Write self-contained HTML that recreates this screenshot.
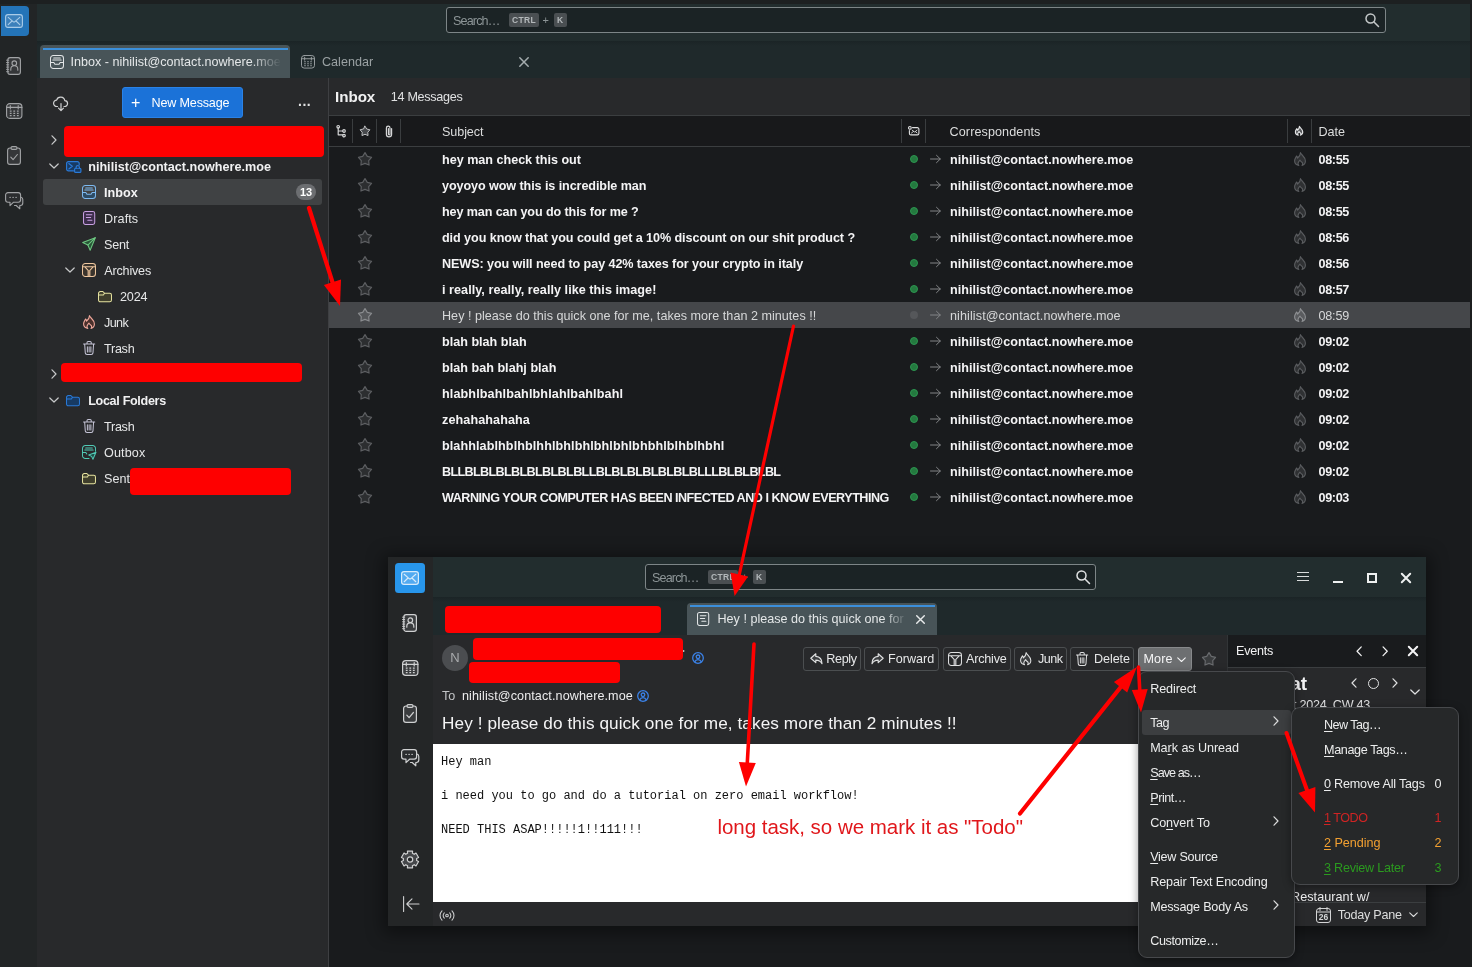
<!DOCTYPE html><html><head><meta charset="utf-8"><title>Thunderbird</title><style>
*{box-sizing:border-box;margin:0;padding:0}
html,body{width:1472px;height:967px;overflow:hidden;background:#191b1d}
body{position:relative;will-change:transform;font-family:"Liberation Sans",sans-serif;font-size:12.6px;color:#e6e7e8}
.a{position:absolute}
.t{position:absolute;white-space:pre;line-height:26px;height:26px;margin-top:1px}
.b{font-weight:bold}
svg{position:absolute;overflow:visible}
.ic{fill:none;stroke-width:1.2;stroke-linecap:round;stroke-linejoin:round}
.red{position:absolute;background:#fe0000;border-radius:4px}
.mi{position:absolute;white-space:pre;line-height:25px;height:25px;color:#eceded;font-size:12.6px;margin-top:1px}
u{text-decoration-thickness:1px;text-underline-offset:1.5px}
.btn{position:absolute;top:647px;height:24px;border:1px solid #4b4e50;border-radius:3px;line-height:22px;font-size:12.6px;color:#e6e7e8;white-space:pre}
.kbd{background:#4a4f52;color:#b4b9bb;font-size:8.5px;font-weight:bold;line-height:14px;height:14px;border-radius:2px;text-align:center;letter-spacing:.3px}
</style></head><body>
<div class="a" style="left:0;top:0;width:1472px;height:4px;background:#1d2021"></div>
<div class="a" style="left:37px;top:4px;width:1435px;height:37px;background:#222d2e"></div>
<div class="a" style="left:37px;top:41px;width:1435px;height:37px;background:linear-gradient(#1b2426,#1f292b 5px,#1f292b)"></div>
<div class="a" style="left:0;top:4px;width:37px;height:963px;background:#222526"></div>
<div class="a" style="left:1px;top:6px;width:28px;height:30px;background:#2474b8;border-radius:0 4px 4px 0"></div>
<svg class="ic" style="left:5px;top:14px" width="18" height="14" viewBox="0 0 18 14" ><g stroke="#a9cbe8" stroke-width="1.1"><rect x="0.6" y="0.6" width="16.8" height="12.8" rx="2.4" fill="#3c80bb"/><path d="M3.2 3.3L8.1 7.6a1.4 1.4 0 0 0 1.800 0L14.800 3.300M3.200 10.700L7 7M14.800 10.700L11 7"/></g></svg>
<svg class="ic" style="left:6.0px;top:57px" width="15" height="18" viewBox="0 0 15 18" ><g stroke="#a2a4a6" stroke-width="1.1"><rect x="1.800" y="0.600" width="12.600" height="16.800" rx="2.400" fill="#353739"/><path stroke-width="0.9" d="M0.500 3.200h2.200M0.500 5.500h2.200M0.500 7.800h2.200M0.500 10.100h2.200M0.500 12.400h2.200M0.500 14.700h2.200"/><circle cx="8.300" cy="6.200" r="2.300"/><path d="M4.800 13.200v-1a3.500 3.400 0 0 1 7 0v1"/></g></svg>
<svg class="ic" style="left:5.949999999999999px;top:103.0px" width="16.5" height="16.0" viewBox="0 0 16.500 16" ><g stroke="#a2a4a6" stroke-width="1.1"><rect x="0.600" y="0.600" width="15.300" height="14.800" rx="3.200" fill="#353739"/><path d="M0.600 4.400h15.300M4.300 2.600v3.400M12.200 2.600v3.400"/><path stroke-width="1.250" stroke-linecap="butt" d="M3.800 8h1.800M7.350 8h1.800M10.900 8h1.800M3.800 10.300h1.800M7.350 10.300h1.800M10.900 10.300h1.800M3.800 12.600h1.800M7.350 12.600h1.800M10.900 12.600h1.800"/></g></svg>
<svg class="ic" style="left:7px;top:146.3px" width="14" height="19" viewBox="0 0 14 19" ><g stroke="#a2a4a6" stroke-width="1.1"><rect x="0.600" y="2" width="12.800" height="16.400" rx="2.400" fill="#353739"/><rect x="4" y="0.600" width="6" height="2.800" rx="1.300" fill="#353739"/><path d="M3.800 11.200l2.300 2.500 4.300-5.200"/></g></svg>
<svg class="ic" style="left:5.0px;top:192.2px" width="18.4" height="17.6" viewBox="0 0 18.400 17.600" ><g stroke="#a2a4a6" stroke-width="1.1"><path d="M16 5.200a2.400 2.400 0 0 1 1.800 2.300v3.600a2.400 2.400 0 0 1-2.400 2.400h-.6v3.300l-3.600-3.300H9.500" fill="#2b2d2f"/><path fill="#2b2d2f" d="M3 0.600h10.200a2.400 2.400 0 0 1 2.400 2.400v4.800a2.400 2.400 0 0 1-2.400 2.400H8.600L5 13.600v-3.400H3A2.400 2.400 0 0 1 0.600 7.800V3A2.400 2.400 0 0 1 3 0.600z"/><path stroke-width="1.300" d="M5 5.400h.2M8 5.400h.2M11 5.400h.2"/></g></svg>
<div class="a" style="left:446px;top:7px;width:940px;height:26px;background:#1b2325;border:1px solid #7d8587;border-radius:3px"></div>
<div class="t" style="left:453px;top:7px;color:#8d9597;letter-spacing:-0.860px;">Search…</div>
<div class="a kbd" style="left:509px;top:13px;width:30px">CTRL</div>
<div class="a" style="left:542.5px;top:13px;font-size:11px;line-height:14px;color:#8d9597">+</div>
<div class="a kbd" style="left:553.5px;top:13px;width:13.5px">K</div>
<svg class="ic" style="left:1365px;top:12.5px" width="14" height="14" viewBox="0 0 14 14" ><g stroke="#c4c8c9" stroke-width="1.500"><circle cx="5.500" cy="5.500" r="4.500"/><path d="M9 9l4.500 4.500"/></g></svg>
<div class="a" style="left:40px;top:45px;width:250px;height:33px;background:#485458;border-radius:4px 4px 0 0"></div>
<div class="a" style="left:43px;top:47.500px;width:245px;height:2.500px;background:#3b8fdb"></div>
<svg class="ic" style="left:50.0px;top:54.5px" width="14.0" height="14.0" viewBox="0 0 16 16" ><g stroke="#e4e7e8" stroke-width="1.15"><path stroke="none" fill="none" d="M0.600 8.500h3.800l1.200 2.200h4.800l1.200-2.200h3.800v4a3 3 0 0 1-3 3H3.600a3 3 0 0 1-3-3z"/><rect x="0.600" y="0.600" width="14.800" height="14.800" rx="3.200"/><path d="M0.600 8.500h3.800l1.200 2.200h4.800l1.200-2.200h3.800M3.200 5.800h9.600M4.200 3.300h7.600"/></g></svg>
<div class="t" style="left:70.500px;top:48px;width:212px;overflow:hidden;color:#e4e7e8;-webkit-mask-image:linear-gradient(90deg,#000 180px,transparent 210px)">Inbox - nihilist@contact.nowhere.moe</div>
<svg class="ic" style="left:300.9875px;top:54.7px" width="14.025" height="13.6" viewBox="0 0 16.500 16" ><g stroke="#9da3a5" stroke-width="1.1"><rect x="0.600" y="0.600" width="15.300" height="14.800" rx="3.200" fill="none"/><path d="M0.600 4.400h15.300M4.300 2.600v3.400M12.200 2.600v3.400"/><path stroke-width="1.250" stroke-linecap="butt" d="M3.800 8h1.800M7.350 8h1.800M10.900 8h1.800M3.800 10.300h1.800M7.350 10.300h1.800M10.900 10.300h1.800M3.800 12.600h1.800M7.350 12.600h1.800M10.900 12.600h1.800"/></g></svg>
<div class="t" style="left:322px;top:48px;color:#9aa1a3">Calendar</div>
<svg class="ic" style="left:518.5px;top:57.0px" width="10.0" height="10.0" viewBox="0 0 10 10" ><path stroke="#a5adaf" stroke-width="1.5" d="M0.800 0.800l8.400 8.400M9.200 0.800L0.800 9.200"/></svg>
<div class="a" style="left:37px;top:78px;width:292px;height:889px;background:#28292b;border-right:1px solid #3e3f42"></div>
<div class="a" style="left:329px;top:78px;width:1143px;height:38px;background:#28292b;border-bottom:1px solid #3b3e40"></div>
<div class="t b" style="left:335px;top:83px;font-size:15.2px;color:#f1f1f2;letter-spacing:-0.046px;">Inbox</div>
<div class="t" style="left:390.8px;top:83px;color:#e0e1e2;letter-spacing:-0.295px;">14 Messages</div>
<div class="a" style="left:329px;top:116px;width:1143px;height:31px;background:#18191b;border-bottom:1px solid #3b3e40"></div>
<div class="a" style="left:352px;top:119px;width:1px;height:24px;background:#3a3d3f"></div>
<div class="a" style="left:376px;top:119px;width:1px;height:24px;background:#3a3d3f"></div>
<div class="a" style="left:400px;top:119px;width:1px;height:24px;background:#3a3d3f"></div>
<div class="a" style="left:901px;top:119px;width:1px;height:24px;background:#3a3d3f"></div>
<div class="a" style="left:925px;top:119px;width:1px;height:24px;background:#3a3d3f"></div>
<div class="a" style="left:1287px;top:119px;width:1px;height:24px;background:#3a3d3f"></div>
<div class="a" style="left:1311px;top:119px;width:1px;height:24px;background:#3a3d3f"></div>
<div class="t" style="left:442px;top:118px;color:#dcdddd;letter-spacing:-0.090px;">Subject</div>
<div class="t" style="left:949.6px;top:118px;color:#dcdddd;letter-spacing:0.089px;">Correspondents</div>
<div class="t" style="left:1318.5px;top:118px;color:#dcdddd;letter-spacing:-0.029px;">Date</div>
<svg class="ic" style="left:336px;top:125px" width="10" height="13" viewBox="0 0 10 13" ><g stroke="#d5d6d7"><path d="M2.200 2.600v7.200h4.600M2.200 6h4.600"/><circle cx="2.200" cy="1.800" r="1.300"/><circle cx="8" cy="6" r="1.300"/><circle cx="8" cy="10.600" r="1.300"/></g></svg>
<svg class="ic" style="left:359.0px;top:125.0px" width="12.0" height="12.0" viewBox="0 0 16 16" ><path stroke="#d5d6d7" fill="#47494c" stroke-width="1.15" d="M8.00 1.60 L10.29 5.34 L14.56 6.37 L11.71 9.71 L12.06 14.08 L8.00 12.40 L3.94 14.08 L4.29 9.71 L1.44 6.37 L5.71 5.34Z"/></svg>
<svg class="ic" style="left:385px;top:125px" width="8" height="13" viewBox="0 0 8 13" ><path stroke="#d5d6d7" d="M6.600 3.500v5.800a2.600 2.600 0 0 1-5.200 0V3a1.800 1.800 0 0 1 3.600 0v6a0.800 0.800 0 0 1-1.600 0V3.500"/></svg>
<svg class="ic" style="left:908px;top:125.5px" width="11.5" height="9.5" viewBox="0 0 11.5 9.5" ><g stroke="#e0e1e2" stroke-width="1.1"><path d="M4.500 1.600h4.900a1.500 1.500 0 0 1 1.500 1.500v4.300a1.500 1.500 0 0 1-1.500 1.500H2.900a1.500 1.500 0 0 1-1.500-1.500V4.500"/><path stroke-width="0.9" d="M3.500 7l2-1.600 0.800 0.600 0.800-0.600 2 1.600M4.200 4.200l1.500 1.200M9 4.200L7.500 5.400"/><circle cx="1.900" cy="1.900" r="1.350"/></g></svg>
<svg class="ic" style="left:1295.42px;top:126.24px" width="8.16" height="9.520000000000001" viewBox="0 0 12 14" ><path stroke="#e4e5e6" stroke-width="1.7" fill="#55575a" d="M6.500 0.600C7 3 11.400 4.500 11.400 9C11.400 11.400 9.800 13 8 13.400C8.900 12.400 8.900 10.800 7.600 10C6.800 9.500 6.200 9 6 8C5.200 9 4 10 4 11.500C4 12.300 4.300 13 4.800 13.400C2.500 13 0.600 11.200 0.600 8.800C0.600 6.500 2 5.500 2.600 4C3.300 4.600 3.600 5.400 3.600 6.200C5 5 6.500 3 6.500 0.600Z"/></svg>
<svg class="ic" style="left:357.0px;top:150.5px" width="16.0" height="16.0" viewBox="0 0 16 16" ><path stroke="#5d5f62" fill="#2c2e30" stroke-width="1.15" d="M8.00 1.60 L10.29 5.34 L14.56 6.37 L11.71 9.71 L12.06 14.08 L8.00 12.40 L3.94 14.08 L4.29 9.71 L1.44 6.37 L5.71 5.34Z"/></svg>
<div class="t b" style="left:442px;top:146px;color:#f4f4f5;letter-spacing:-0.015px;">hey man check this out</div>
<div class="a" style="left:909.500px;top:155px;width:8px;height:8px;border-radius:50%;background:#24793f;border:1.600px solid #2c9650"></div>
<svg class="ic" style="left:929.5px;top:154.5px" width="11" height="8" viewBox="0 0 11 8" ><path stroke="#838587" stroke-width="1" d="M0.500 4h9.800M6.500 0.300L10.300 4 6.500 7.700"/></svg>
<div class="t b" style="left:950px;top:146px;color:#f4f4f5;letter-spacing:0.032px;">nihilist@contact.nowhere.moe</div>
<svg class="ic" style="left:1293.5px;top:152.0px" width="12.0" height="14.0" viewBox="0 0 12 14" ><path stroke="#5a5c5f" stroke-width="1.1" fill="#2f3133" d="M6.500 0.600C7 3 11.400 4.500 11.400 9C11.400 11.400 9.800 13 8 13.400C8.900 12.400 8.900 10.800 7.600 10C6.800 9.500 6.200 9 6 8C5.200 9 4 10 4 11.500C4 12.300 4.300 13 4.800 13.400C2.500 13 0.600 11.200 0.600 8.800C0.600 6.500 2 5.500 2.600 4C3.300 4.600 3.600 5.400 3.600 6.200C5 5 6.500 3 6.500 0.600Z"/></svg>
<div class="t b" style="left:1318.5px;top:146px;color:#f4f4f5;letter-spacing:-0.345px;">08:55</div>
<svg class="ic" style="left:357.0px;top:176.5px" width="16.0" height="16.0" viewBox="0 0 16 16" ><path stroke="#5d5f62" fill="#2c2e30" stroke-width="1.15" d="M8.00 1.60 L10.29 5.34 L14.56 6.37 L11.71 9.71 L12.06 14.08 L8.00 12.40 L3.94 14.08 L4.29 9.71 L1.44 6.37 L5.71 5.34Z"/></svg>
<div class="t b" style="left:442px;top:172px;color:#f4f4f5;letter-spacing:-0.086px;">yoyoyo wow this is incredible man</div>
<div class="a" style="left:909.500px;top:181px;width:8px;height:8px;border-radius:50%;background:#24793f;border:1.600px solid #2c9650"></div>
<svg class="ic" style="left:929.5px;top:180.5px" width="11" height="8" viewBox="0 0 11 8" ><path stroke="#838587" stroke-width="1" d="M0.500 4h9.800M6.500 0.300L10.300 4 6.500 7.700"/></svg>
<div class="t b" style="left:950px;top:172px;color:#f4f4f5;letter-spacing:0.032px;">nihilist@contact.nowhere.moe</div>
<svg class="ic" style="left:1293.5px;top:178.0px" width="12.0" height="14.0" viewBox="0 0 12 14" ><path stroke="#5a5c5f" stroke-width="1.1" fill="#2f3133" d="M6.500 0.600C7 3 11.400 4.500 11.400 9C11.400 11.400 9.800 13 8 13.400C8.900 12.400 8.900 10.800 7.600 10C6.800 9.500 6.200 9 6 8C5.200 9 4 10 4 11.500C4 12.300 4.300 13 4.800 13.400C2.500 13 0.600 11.200 0.600 8.800C0.600 6.500 2 5.500 2.600 4C3.300 4.600 3.600 5.400 3.600 6.200C5 5 6.500 3 6.500 0.600Z"/></svg>
<div class="t b" style="left:1318.5px;top:172px;color:#f4f4f5;letter-spacing:-0.345px;">08:55</div>
<svg class="ic" style="left:357.0px;top:202.5px" width="16.0" height="16.0" viewBox="0 0 16 16" ><path stroke="#5d5f62" fill="#2c2e30" stroke-width="1.15" d="M8.00 1.60 L10.29 5.34 L14.56 6.37 L11.71 9.71 L12.06 14.08 L8.00 12.40 L3.94 14.08 L4.29 9.71 L1.44 6.37 L5.71 5.34Z"/></svg>
<div class="t b" style="left:442px;top:198px;color:#f4f4f5;letter-spacing:-0.110px;">hey man can you do this for me ?</div>
<div class="a" style="left:909.500px;top:207px;width:8px;height:8px;border-radius:50%;background:#24793f;border:1.600px solid #2c9650"></div>
<svg class="ic" style="left:929.5px;top:206.5px" width="11" height="8" viewBox="0 0 11 8" ><path stroke="#838587" stroke-width="1" d="M0.500 4h9.800M6.500 0.300L10.300 4 6.500 7.700"/></svg>
<div class="t b" style="left:950px;top:198px;color:#f4f4f5;letter-spacing:0.032px;">nihilist@contact.nowhere.moe</div>
<svg class="ic" style="left:1293.5px;top:204.0px" width="12.0" height="14.0" viewBox="0 0 12 14" ><path stroke="#5a5c5f" stroke-width="1.1" fill="#2f3133" d="M6.500 0.600C7 3 11.400 4.500 11.400 9C11.400 11.400 9.800 13 8 13.400C8.900 12.400 8.900 10.800 7.600 10C6.800 9.500 6.200 9 6 8C5.200 9 4 10 4 11.500C4 12.300 4.300 13 4.800 13.400C2.500 13 0.600 11.200 0.600 8.800C0.600 6.500 2 5.500 2.600 4C3.300 4.600 3.600 5.400 3.600 6.200C5 5 6.500 3 6.500 0.600Z"/></svg>
<div class="t b" style="left:1318.5px;top:198px;color:#f4f4f5;letter-spacing:-0.345px;">08:55</div>
<svg class="ic" style="left:357.0px;top:228.5px" width="16.0" height="16.0" viewBox="0 0 16 16" ><path stroke="#5d5f62" fill="#2c2e30" stroke-width="1.15" d="M8.00 1.60 L10.29 5.34 L14.56 6.37 L11.71 9.71 L12.06 14.08 L8.00 12.40 L3.94 14.08 L4.29 9.71 L1.44 6.37 L5.71 5.34Z"/></svg>
<div class="t b" style="left:442px;top:224px;color:#f4f4f5;letter-spacing:-0.069px;">did you know that you could get a 10% discount on our shit product ?</div>
<div class="a" style="left:909.500px;top:233px;width:8px;height:8px;border-radius:50%;background:#24793f;border:1.600px solid #2c9650"></div>
<svg class="ic" style="left:929.5px;top:232.5px" width="11" height="8" viewBox="0 0 11 8" ><path stroke="#838587" stroke-width="1" d="M0.500 4h9.800M6.500 0.300L10.300 4 6.500 7.700"/></svg>
<div class="t b" style="left:950px;top:224px;color:#f4f4f5;letter-spacing:0.032px;">nihilist@contact.nowhere.moe</div>
<svg class="ic" style="left:1293.5px;top:230.0px" width="12.0" height="14.0" viewBox="0 0 12 14" ><path stroke="#5a5c5f" stroke-width="1.1" fill="#2f3133" d="M6.500 0.600C7 3 11.400 4.500 11.400 9C11.400 11.400 9.800 13 8 13.400C8.900 12.400 8.900 10.800 7.600 10C6.800 9.500 6.200 9 6 8C5.200 9 4 10 4 11.500C4 12.300 4.300 13 4.800 13.400C2.500 13 0.600 11.200 0.600 8.800C0.600 6.500 2 5.500 2.600 4C3.300 4.600 3.600 5.400 3.600 6.200C5 5 6.500 3 6.500 0.600Z"/></svg>
<div class="t b" style="left:1318.5px;top:224px;color:#f4f4f5;letter-spacing:-0.345px;">08:56</div>
<svg class="ic" style="left:357.0px;top:254.5px" width="16.0" height="16.0" viewBox="0 0 16 16" ><path stroke="#5d5f62" fill="#2c2e30" stroke-width="1.15" d="M8.00 1.60 L10.29 5.34 L14.56 6.37 L11.71 9.71 L12.06 14.08 L8.00 12.40 L3.94 14.08 L4.29 9.71 L1.44 6.37 L5.71 5.34Z"/></svg>
<div class="t b" style="left:442px;top:250px;color:#f4f4f5;letter-spacing:-0.080px;">NEWS: you will need to pay 42% taxes for your crypto in italy</div>
<div class="a" style="left:909.500px;top:259px;width:8px;height:8px;border-radius:50%;background:#24793f;border:1.600px solid #2c9650"></div>
<svg class="ic" style="left:929.5px;top:258.5px" width="11" height="8" viewBox="0 0 11 8" ><path stroke="#838587" stroke-width="1" d="M0.500 4h9.800M6.500 0.300L10.300 4 6.500 7.700"/></svg>
<div class="t b" style="left:950px;top:250px;color:#f4f4f5;letter-spacing:0.032px;">nihilist@contact.nowhere.moe</div>
<svg class="ic" style="left:1293.5px;top:256.0px" width="12.0" height="14.0" viewBox="0 0 12 14" ><path stroke="#5a5c5f" stroke-width="1.1" fill="#2f3133" d="M6.500 0.600C7 3 11.400 4.500 11.400 9C11.400 11.400 9.800 13 8 13.400C8.900 12.400 8.900 10.800 7.600 10C6.800 9.500 6.200 9 6 8C5.200 9 4 10 4 11.500C4 12.300 4.300 13 4.800 13.400C2.500 13 0.600 11.200 0.600 8.800C0.600 6.500 2 5.500 2.600 4C3.300 4.600 3.600 5.400 3.600 6.200C5 5 6.500 3 6.500 0.600Z"/></svg>
<div class="t b" style="left:1318.5px;top:250px;color:#f4f4f5;letter-spacing:-0.345px;">08:56</div>
<svg class="ic" style="left:357.0px;top:280.5px" width="16.0" height="16.0" viewBox="0 0 16 16" ><path stroke="#5d5f62" fill="#2c2e30" stroke-width="1.15" d="M8.00 1.60 L10.29 5.34 L14.56 6.37 L11.71 9.71 L12.06 14.08 L8.00 12.40 L3.94 14.08 L4.29 9.71 L1.44 6.37 L5.71 5.34Z"/></svg>
<div class="t b" style="left:442px;top:276px;color:#f4f4f5;letter-spacing:0.050px;">i really, really, really like this image!</div>
<div class="a" style="left:909.500px;top:285px;width:8px;height:8px;border-radius:50%;background:#24793f;border:1.600px solid #2c9650"></div>
<svg class="ic" style="left:929.5px;top:284.5px" width="11" height="8" viewBox="0 0 11 8" ><path stroke="#838587" stroke-width="1" d="M0.500 4h9.800M6.500 0.300L10.300 4 6.500 7.700"/></svg>
<div class="t b" style="left:950px;top:276px;color:#f4f4f5;letter-spacing:0.032px;">nihilist@contact.nowhere.moe</div>
<svg class="ic" style="left:1293.5px;top:282.0px" width="12.0" height="14.0" viewBox="0 0 12 14" ><path stroke="#5a5c5f" stroke-width="1.1" fill="#2f3133" d="M6.500 0.600C7 3 11.400 4.500 11.400 9C11.400 11.400 9.800 13 8 13.400C8.900 12.400 8.900 10.800 7.600 10C6.800 9.500 6.200 9 6 8C5.200 9 4 10 4 11.500C4 12.300 4.300 13 4.800 13.400C2.500 13 0.600 11.200 0.600 8.800C0.600 6.500 2 5.500 2.600 4C3.300 4.600 3.600 5.400 3.600 6.200C5 5 6.500 3 6.500 0.600Z"/></svg>
<div class="t b" style="left:1318.5px;top:276px;color:#f4f4f5;letter-spacing:-0.345px;">08:57</div>
<div class="a" style="left:329px;top:302px;width:1143px;height:26px;background:#45474a"></div>
<svg class="ic" style="left:357.0px;top:306.5px" width="16.0" height="16.0" viewBox="0 0 16 16" ><path stroke="#8a8c8f" fill="#56585b" stroke-width="1.15" d="M8.00 1.60 L10.29 5.34 L14.56 6.37 L11.71 9.71 L12.06 14.08 L8.00 12.40 L3.94 14.08 L4.29 9.71 L1.44 6.37 L5.71 5.34Z"/></svg>
<div class="t" style="left:442px;top:302px;color:#d7d8d9;letter-spacing:0.017px;">Hey ! please do this quick one for me, takes more than 2 minutes !!</div>
<div class="a" style="left:909.500px;top:311px;width:8px;height:8px;border-radius:50%;background:#55575a"></div>
<svg class="ic" style="left:929.5px;top:310.5px" width="11" height="8" viewBox="0 0 11 8" ><path stroke="#838587" stroke-width="1" d="M0.500 4h9.800M6.500 0.300L10.300 4 6.500 7.700"/></svg>
<div class="t" style="left:950px;top:302px;color:#d7d8d9;letter-spacing:0.090px;">nihilist@contact.nowhere.moe</div>
<svg class="ic" style="left:1293.5px;top:308.0px" width="12.0" height="14.0" viewBox="0 0 12 14" ><path stroke="#8e9093" stroke-width="1.1" fill="#5a5c5f" d="M6.500 0.600C7 3 11.400 4.500 11.400 9C11.400 11.400 9.800 13 8 13.400C8.900 12.400 8.900 10.800 7.600 10C6.800 9.500 6.200 9 6 8C5.200 9 4 10 4 11.500C4 12.300 4.300 13 4.800 13.400C2.500 13 0.600 11.200 0.600 8.800C0.600 6.500 2 5.500 2.600 4C3.300 4.600 3.600 5.400 3.600 6.200C5 5 6.500 3 6.500 0.600Z"/></svg>
<div class="t" style="left:1318.5px;top:302px;color:#d7d8d9;letter-spacing:-0.206px;">08:59</div>
<svg class="ic" style="left:357.0px;top:332.5px" width="16.0" height="16.0" viewBox="0 0 16 16" ><path stroke="#5d5f62" fill="#2c2e30" stroke-width="1.15" d="M8.00 1.60 L10.29 5.34 L14.56 6.37 L11.71 9.71 L12.06 14.08 L8.00 12.40 L3.94 14.08 L4.29 9.71 L1.44 6.37 L5.71 5.34Z"/></svg>
<div class="t b" style="left:442px;top:328px;color:#f4f4f5;letter-spacing:-0.000px;">blah blah blah</div>
<div class="a" style="left:909.500px;top:337px;width:8px;height:8px;border-radius:50%;background:#24793f;border:1.600px solid #2c9650"></div>
<svg class="ic" style="left:929.5px;top:336.5px" width="11" height="8" viewBox="0 0 11 8" ><path stroke="#838587" stroke-width="1" d="M0.500 4h9.800M6.500 0.300L10.300 4 6.500 7.700"/></svg>
<div class="t b" style="left:950px;top:328px;color:#f4f4f5;letter-spacing:0.032px;">nihilist@contact.nowhere.moe</div>
<svg class="ic" style="left:1293.5px;top:334.0px" width="12.0" height="14.0" viewBox="0 0 12 14" ><path stroke="#5a5c5f" stroke-width="1.1" fill="#2f3133" d="M6.500 0.600C7 3 11.400 4.500 11.400 9C11.400 11.400 9.800 13 8 13.400C8.900 12.400 8.900 10.800 7.600 10C6.800 9.500 6.200 9 6 8C5.200 9 4 10 4 11.500C4 12.300 4.300 13 4.800 13.400C2.500 13 0.600 11.200 0.600 8.800C0.600 6.500 2 5.500 2.600 4C3.300 4.600 3.600 5.400 3.600 6.200C5 5 6.500 3 6.500 0.600Z"/></svg>
<div class="t b" style="left:1318.5px;top:328px;color:#f4f4f5;letter-spacing:-0.345px;">09:02</div>
<svg class="ic" style="left:357.0px;top:358.5px" width="16.0" height="16.0" viewBox="0 0 16 16" ><path stroke="#5d5f62" fill="#2c2e30" stroke-width="1.15" d="M8.00 1.60 L10.29 5.34 L14.56 6.37 L11.71 9.71 L12.06 14.08 L8.00 12.40 L3.94 14.08 L4.29 9.71 L1.44 6.37 L5.71 5.34Z"/></svg>
<div class="t b" style="left:442px;top:354px;color:#f4f4f5;letter-spacing:0.015px;">blah bah blahj blah</div>
<div class="a" style="left:909.500px;top:363px;width:8px;height:8px;border-radius:50%;background:#24793f;border:1.600px solid #2c9650"></div>
<svg class="ic" style="left:929.5px;top:362.5px" width="11" height="8" viewBox="0 0 11 8" ><path stroke="#838587" stroke-width="1" d="M0.500 4h9.800M6.500 0.300L10.300 4 6.500 7.700"/></svg>
<div class="t b" style="left:950px;top:354px;color:#f4f4f5;letter-spacing:0.032px;">nihilist@contact.nowhere.moe</div>
<svg class="ic" style="left:1293.5px;top:360.0px" width="12.0" height="14.0" viewBox="0 0 12 14" ><path stroke="#5a5c5f" stroke-width="1.1" fill="#2f3133" d="M6.500 0.600C7 3 11.400 4.500 11.400 9C11.400 11.400 9.800 13 8 13.400C8.900 12.400 8.900 10.800 7.600 10C6.800 9.500 6.200 9 6 8C5.200 9 4 10 4 11.500C4 12.300 4.300 13 4.800 13.400C2.500 13 0.600 11.200 0.600 8.800C0.600 6.500 2 5.500 2.600 4C3.300 4.600 3.600 5.400 3.600 6.200C5 5 6.500 3 6.500 0.600Z"/></svg>
<div class="t b" style="left:1318.5px;top:354px;color:#f4f4f5;letter-spacing:-0.345px;">09:02</div>
<svg class="ic" style="left:357.0px;top:384.5px" width="16.0" height="16.0" viewBox="0 0 16 16" ><path stroke="#5d5f62" fill="#2c2e30" stroke-width="1.15" d="M8.00 1.60 L10.29 5.34 L14.56 6.37 L11.71 9.71 L12.06 14.08 L8.00 12.40 L3.94 14.08 L4.29 9.71 L1.44 6.37 L5.71 5.34Z"/></svg>
<div class="t b" style="left:442px;top:380px;color:#f4f4f5;letter-spacing:0.121px;">hlabhlbahlbahlbhlahlbahlbahl</div>
<div class="a" style="left:909.500px;top:389px;width:8px;height:8px;border-radius:50%;background:#24793f;border:1.600px solid #2c9650"></div>
<svg class="ic" style="left:929.5px;top:388.5px" width="11" height="8" viewBox="0 0 11 8" ><path stroke="#838587" stroke-width="1" d="M0.500 4h9.800M6.500 0.300L10.300 4 6.500 7.700"/></svg>
<div class="t b" style="left:950px;top:380px;color:#f4f4f5;letter-spacing:0.032px;">nihilist@contact.nowhere.moe</div>
<svg class="ic" style="left:1293.5px;top:386.0px" width="12.0" height="14.0" viewBox="0 0 12 14" ><path stroke="#5a5c5f" stroke-width="1.1" fill="#2f3133" d="M6.500 0.600C7 3 11.400 4.500 11.400 9C11.400 11.400 9.800 13 8 13.400C8.900 12.400 8.900 10.800 7.600 10C6.800 9.500 6.200 9 6 8C5.200 9 4 10 4 11.500C4 12.300 4.300 13 4.800 13.400C2.500 13 0.600 11.200 0.600 8.800C0.600 6.500 2 5.500 2.600 4C3.300 4.600 3.600 5.400 3.600 6.200C5 5 6.500 3 6.500 0.600Z"/></svg>
<div class="t b" style="left:1318.5px;top:380px;color:#f4f4f5;letter-spacing:-0.345px;">09:02</div>
<svg class="ic" style="left:357.0px;top:410.5px" width="16.0" height="16.0" viewBox="0 0 16 16" ><path stroke="#5d5f62" fill="#2c2e30" stroke-width="1.15" d="M8.00 1.60 L10.29 5.34 L14.56 6.37 L11.71 9.71 L12.06 14.08 L8.00 12.40 L3.94 14.08 L4.29 9.71 L1.44 6.37 L5.71 5.34Z"/></svg>
<div class="t b" style="left:442px;top:406px;color:#f4f4f5;letter-spacing:0.098px;">zehahahahaha</div>
<div class="a" style="left:909.500px;top:415px;width:8px;height:8px;border-radius:50%;background:#24793f;border:1.600px solid #2c9650"></div>
<svg class="ic" style="left:929.5px;top:414.5px" width="11" height="8" viewBox="0 0 11 8" ><path stroke="#838587" stroke-width="1" d="M0.500 4h9.800M6.500 0.300L10.300 4 6.500 7.700"/></svg>
<div class="t b" style="left:950px;top:406px;color:#f4f4f5;letter-spacing:0.032px;">nihilist@contact.nowhere.moe</div>
<svg class="ic" style="left:1293.5px;top:412.0px" width="12.0" height="14.0" viewBox="0 0 12 14" ><path stroke="#5a5c5f" stroke-width="1.1" fill="#2f3133" d="M6.500 0.600C7 3 11.400 4.500 11.400 9C11.400 11.400 9.800 13 8 13.400C8.900 12.400 8.900 10.800 7.600 10C6.800 9.500 6.200 9 6 8C5.200 9 4 10 4 11.500C4 12.300 4.300 13 4.800 13.400C2.500 13 0.600 11.200 0.600 8.800C0.600 6.500 2 5.500 2.600 4C3.300 4.600 3.600 5.400 3.600 6.200C5 5 6.500 3 6.500 0.600Z"/></svg>
<div class="t b" style="left:1318.5px;top:406px;color:#f4f4f5;letter-spacing:-0.345px;">09:02</div>
<svg class="ic" style="left:357.0px;top:436.5px" width="16.0" height="16.0" viewBox="0 0 16 16" ><path stroke="#5d5f62" fill="#2c2e30" stroke-width="1.15" d="M8.00 1.60 L10.29 5.34 L14.56 6.37 L11.71 9.71 L12.06 14.08 L8.00 12.40 L3.94 14.08 L4.29 9.71 L1.44 6.37 L5.71 5.34Z"/></svg>
<div class="t b" style="left:442px;top:432px;color:#f4f4f5;letter-spacing:0.088px;">blahhlablhblhblhhlbhlbhlbhlbhlbhbhlblhblhbhl</div>
<div class="a" style="left:909.500px;top:441px;width:8px;height:8px;border-radius:50%;background:#24793f;border:1.600px solid #2c9650"></div>
<svg class="ic" style="left:929.5px;top:440.5px" width="11" height="8" viewBox="0 0 11 8" ><path stroke="#838587" stroke-width="1" d="M0.500 4h9.800M6.500 0.300L10.300 4 6.500 7.700"/></svg>
<div class="t b" style="left:950px;top:432px;color:#f4f4f5;letter-spacing:0.032px;">nihilist@contact.nowhere.moe</div>
<svg class="ic" style="left:1293.5px;top:438.0px" width="12.0" height="14.0" viewBox="0 0 12 14" ><path stroke="#5a5c5f" stroke-width="1.1" fill="#2f3133" d="M6.500 0.600C7 3 11.400 4.500 11.400 9C11.400 11.400 9.800 13 8 13.400C8.900 12.400 8.900 10.800 7.600 10C6.800 9.500 6.200 9 6 8C5.200 9 4 10 4 11.500C4 12.300 4.300 13 4.800 13.400C2.500 13 0.600 11.200 0.600 8.800C0.600 6.500 2 5.500 2.600 4C3.300 4.600 3.600 5.400 3.600 6.200C5 5 6.500 3 6.500 0.600Z"/></svg>
<div class="t b" style="left:1318.5px;top:432px;color:#f4f4f5;letter-spacing:-0.345px;">09:02</div>
<svg class="ic" style="left:357.0px;top:462.5px" width="16.0" height="16.0" viewBox="0 0 16 16" ><path stroke="#5d5f62" fill="#2c2e30" stroke-width="1.15" d="M8.00 1.60 L10.29 5.34 L14.56 6.37 L11.71 9.71 L12.06 14.08 L8.00 12.40 L3.94 14.08 L4.29 9.71 L1.44 6.37 L5.71 5.34Z"/></svg>
<div class="t b" style="left:442px;top:458px;color:#f4f4f5;letter-spacing:-0.639px;">BLLBLBLBLBLBLBLBLBLLBLBLBLBLBLBLBLLLBLBLBLBL</div>
<div class="a" style="left:909.500px;top:467px;width:8px;height:8px;border-radius:50%;background:#24793f;border:1.600px solid #2c9650"></div>
<svg class="ic" style="left:929.5px;top:466.5px" width="11" height="8" viewBox="0 0 11 8" ><path stroke="#838587" stroke-width="1" d="M0.500 4h9.800M6.500 0.300L10.300 4 6.500 7.700"/></svg>
<div class="t b" style="left:950px;top:458px;color:#f4f4f5;letter-spacing:0.032px;">nihilist@contact.nowhere.moe</div>
<svg class="ic" style="left:1293.5px;top:464.0px" width="12.0" height="14.0" viewBox="0 0 12 14" ><path stroke="#5a5c5f" stroke-width="1.1" fill="#2f3133" d="M6.500 0.600C7 3 11.400 4.500 11.400 9C11.400 11.400 9.800 13 8 13.400C8.900 12.400 8.900 10.800 7.600 10C6.800 9.500 6.200 9 6 8C5.200 9 4 10 4 11.500C4 12.300 4.300 13 4.800 13.400C2.500 13 0.600 11.200 0.600 8.800C0.600 6.500 2 5.500 2.600 4C3.300 4.600 3.600 5.400 3.600 6.200C5 5 6.500 3 6.500 0.600Z"/></svg>
<div class="t b" style="left:1318.5px;top:458px;color:#f4f4f5;letter-spacing:-0.345px;">09:02</div>
<svg class="ic" style="left:357.0px;top:488.5px" width="16.0" height="16.0" viewBox="0 0 16 16" ><path stroke="#5d5f62" fill="#2c2e30" stroke-width="1.15" d="M8.00 1.60 L10.29 5.34 L14.56 6.37 L11.71 9.71 L12.06 14.08 L8.00 12.40 L3.94 14.08 L4.29 9.71 L1.44 6.37 L5.71 5.34Z"/></svg>
<div class="t b" style="left:442px;top:484px;color:#f4f4f5;letter-spacing:-0.489px;">WARNING YOUR COMPUTER HAS BEEN INFECTED AND I KNOW EVERYTHING</div>
<div class="a" style="left:909.500px;top:493px;width:8px;height:8px;border-radius:50%;background:#24793f;border:1.600px solid #2c9650"></div>
<svg class="ic" style="left:929.5px;top:492.5px" width="11" height="8" viewBox="0 0 11 8" ><path stroke="#838587" stroke-width="1" d="M0.500 4h9.800M6.500 0.300L10.300 4 6.500 7.700"/></svg>
<div class="t b" style="left:950px;top:484px;color:#f4f4f5;letter-spacing:0.032px;">nihilist@contact.nowhere.moe</div>
<svg class="ic" style="left:1293.5px;top:490.0px" width="12.0" height="14.0" viewBox="0 0 12 14" ><path stroke="#5a5c5f" stroke-width="1.1" fill="#2f3133" d="M6.500 0.600C7 3 11.400 4.500 11.400 9C11.400 11.400 9.800 13 8 13.400C8.900 12.400 8.900 10.800 7.600 10C6.800 9.500 6.200 9 6 8C5.200 9 4 10 4 11.500C4 12.300 4.300 13 4.800 13.400C2.500 13 0.600 11.200 0.600 8.800C0.600 6.500 2 5.500 2.600 4C3.300 4.600 3.600 5.400 3.600 6.200C5 5 6.500 3 6.500 0.600Z"/></svg>
<div class="t b" style="left:1318.5px;top:484px;color:#f4f4f5;letter-spacing:-0.345px;">09:03</div>
<svg class="ic" style="left:53px;top:96.5px" width="16" height="15" viewBox="0 0 16 15" ><g stroke="#d0d1d2"><path d="M4.500 9.500H4a3.200 3.200 0 0 1-.4-6.400 4.200 4.200 0 0 1 8.200 0.600A2.900 2.900 0 0 1 11.500 9.500H11"/><path d="M8 6.500v7M5.500 11.200L8 13.700l2.500-2.500"/></g></svg>
<div class="a" style="left:122px;top:87px;width:121px;height:31px;background:#1b72d8;border-radius:3px;border:1px solid #2a82e6"></div>
<div class="t" style="left:131px;top:88.500px;color:#fff;font-size:16px;font-weight:normal">+</div>
<div class="t" style="left:151.5px;top:88.5px;color:#fff;letter-spacing:-0.176px;">New Message</div>
<div class="t b" style="left:298px;top:87px;color:#e0e1e2;font-size:14px;letter-spacing:.5px">...</div>
<svg class="ic" style="left:51.0px;top:135.0px" width="6.0" height="10.0" viewBox="0 0 6 10" ><path stroke="#c8c9ca" d="M1 0.8L5 5 1 9.200"/></svg>
<div class="red" style="left:64px;top:126px;width:260px;height:31px"></div>
<svg class="ic" style="left:49.0px;top:163.0px" width="10.0" height="6.0" viewBox="0 0 10 6" ><path stroke="#c8c9ca" d="M0.8 1L5 5 9.200 1"/></svg>
<svg class="ic" style="left:66.0px;top:160.8px" width="15.5" height="12" viewBox="0 0 15.500 12" ><g stroke="#2a7ad8" stroke-width="1.15"><path fill="#173a63" d="M7.500 9.900H2.400a1.800 1.800 0 0 1-1.800-1.800V2.400A1.800 1.800 0 0 1 2.400 0.600h9a1.800 1.800 0 0 1 1.800 1.800V4"/><path d="M2.800 2.500L6.300 5.300 2.800 8"/><rect x="8.600" y="7.200" width="6.300" height="4.200" rx="1" fill="#173a63"/><path d="M10.100 7.200V6.200a1.650 1.650 0 0 1 3.300 0v1"/></g></svg>
<div class="t b" style="left:88.2px;top:153px;color:#f1f1f2;letter-spacing:0.014px;">nihilist@contact.nowhere.moe</div>
<div class="a" style="left:43px;top:179px;width:279px;height:26px;background:#404244;border-radius:3px"></div>
<svg class="ic" style="left:82.0px;top:185.0px" width="14.0" height="14.0" viewBox="0 0 16 16" ><g stroke="#7db9f0" stroke-width="1.15"><path stroke="none" fill="#2d4b64" d="M0.600 8.500h3.800l1.200 2.200h4.800l1.200-2.200h3.800v4a3 3 0 0 1-3 3H3.600a3 3 0 0 1-3-3z"/><rect x="0.600" y="0.600" width="14.800" height="14.800" rx="3.200"/><path d="M0.600 8.500h3.800l1.200 2.200h4.800l1.200-2.200h3.800M3.200 5.800h9.600M4.200 3.300h7.600"/></g></svg>
<div class="t b" style="left:104px;top:179px;color:#f4f4f5;letter-spacing:0.040px;">Inbox</div>
<div class="a b" style="left:296px;top:184px;width:20px;height:16px;border-radius:8px;background:#6c6e71;color:#fff;font-size:11px;line-height:16px;text-align:center">13</div>
<svg class="ic" style="left:82.875px;top:211.0px" width="12.25" height="14.0" viewBox="0 0 14 16" ><g stroke="#c8a0e1" stroke-width="1.15"><rect x="0.600" y="0.600" width="12.800" height="14.800" rx="2.200" fill="#3c2d4b"/><path d="M3.800 4.300h6.400M3.800 7.300h5M5.500 10.500h4.700"/></g></svg>
<div class="t" style="left:104px;top:205px;letter-spacing:0.116px;">Drafts</div>
<svg class="ic" style="left:82.0px;top:237.0px" width="14.0" height="14.0" viewBox="0 0 16 16" ><g stroke="#6ec882" stroke-width="1.15"><path fill="#285537" d="M15.200 0.800L0.800 6.300l5.900 2.900 2.600 6z"/><path d="M6.700 9.200L15.200 0.800"/></g></svg>
<div class="t" style="left:104px;top:231px;letter-spacing:-0.230px;">Sent</div>
<svg class="ic" style="left:65.0px;top:267.0px" width="10.0" height="6.0" viewBox="0 0 10 6" ><path stroke="#c8c9ca" d="M0.8 1L5 5 9.200 1"/></svg>
<svg class="ic" style="left:82.0px;top:263.0px" width="14.0" height="14.0" viewBox="0 0 16 16" ><g stroke="#f0c8a0" stroke-width="1.15"><rect x="0.600" y="0.600" width="14.800" height="14.800" rx="3.200" fill="#3a332c"/><path d="M0.600 4.200h14.800M3 4.200l4 4.300v6.900M13 4.200l-4 4.300v6.900"/><path stroke-width="0.9" stroke-dasharray="1 1" d="M8 8.500v7"/></g></svg>
<div class="t" style="left:104.3px;top:257px;letter-spacing:-0.202px;">Archives</div>
<svg class="ic" style="left:98.0px;top:290.8125px" width="14.0" height="11.375" viewBox="0 0 16 13" ><g stroke="#e6e3a0" stroke-width="1.15"><path fill="#3f3e2c" d="M0.600 2.600a2 2 0 0 1 2-2h3l1.800 2h6a2 2 0 0 1 2 2v5.800a2 2 0 0 1-2 2H2.600a2 2 0 0 1-2-2z"/><path d="M0.600 4.600h5.600l1.200-2"/></g></svg>
<div class="t" style="left:120px;top:283px;letter-spacing:-0.183px;">2024</div>
<svg class="ic" style="left:83.0px;top:315.0px" width="12.0" height="14.0" viewBox="0 0 12 14" ><path stroke="#f0a89c" stroke-width="1.1" fill="#4a302c" d="M6.500 0.600C7 3 11.400 4.500 11.400 9C11.400 11.400 9.800 13 8 13.400C8.900 12.400 8.900 10.800 7.600 10C6.800 9.500 6.200 9 6 8C5.200 9 4 10 4 11.500C4 12.300 4.300 13 4.800 13.400C2.500 13 0.600 11.200 0.600 8.800C0.600 6.500 2 5.500 2.600 4C3.300 4.600 3.600 5.400 3.600 6.200C5 5 6.500 3 6.500 0.600Z"/></svg>
<div class="t" style="left:104px;top:309px;letter-spacing:-0.604px;">Junk</div>
<svg class="ic" style="left:82.875px;top:341.0px" width="12.25" height="14.0" viewBox="0 0 14 16" ><g stroke="#c5c4d6" stroke-width="1.15"><path d="M0.600 3.400h12.800M4.600 3.400V1.800a1.200 1.200 0 0 1 1.200-1.200h2.400a1.200 1.200 0 0 1 1.200 1.200v1.600M1.900 3.400l0.700 10.200a2 2 0 0 0 2 1.800h4.800a2 2 0 0 0 2-1.800l0.700-10.200M5 6.500v6M7 6.500v6M9 6.500v6"/></g></svg>
<div class="t" style="left:104px;top:335px;letter-spacing:-0.268px;">Trash</div>
<svg class="ic" style="left:51.0px;top:369.0px" width="6.0" height="10.0" viewBox="0 0 6 10" ><path stroke="#c8c9ca" d="M1 0.8L5 5 1 9.200"/></svg>
<div class="red" style="left:61px;top:363px;width:241px;height:19px"></div>
<svg class="ic" style="left:49.0px;top:397.0px" width="10.0" height="6.0" viewBox="0 0 10 6" ><path stroke="#c8c9ca" d="M0.8 1L5 5 9.200 1"/></svg>
<svg class="ic" style="left:66.0px;top:394.8125px" width="14.0" height="11.375" viewBox="0 0 16 13" ><g stroke="#2a7ad8" stroke-width="1.15"><path fill="#173a63" d="M0.600 2.600a2 2 0 0 1 2-2h3l1.800 2h6a2 2 0 0 1 2 2v5.800a2 2 0 0 1-2 2H2.600a2 2 0 0 1-2-2z"/><path d="M0.600 4.600h5.600l1.200-2"/></g></svg>
<div class="t b" style="left:88.2px;top:387px;color:#f1f1f2;letter-spacing:-0.325px;">Local Folders</div>
<svg class="ic" style="left:82.875px;top:419.0px" width="12.25" height="14.0" viewBox="0 0 14 16" ><g stroke="#c5c4d6" stroke-width="1.15"><path d="M0.600 3.400h12.800M4.600 3.400V1.800a1.200 1.200 0 0 1 1.200-1.200h2.400a1.200 1.200 0 0 1 1.200 1.200v1.600M1.900 3.400l0.700 10.200a2 2 0 0 0 2 1.800h4.800a2 2 0 0 0 2-1.800l0.700-10.200M5 6.500v6M7 6.500v6M9 6.500v6"/></g></svg>
<div class="t" style="left:104px;top:413px;letter-spacing:-0.268px;">Trash</div>
<svg class="ic" style="left:82.0px;top:445.0px" width="14.0" height="14.0" viewBox="0 0 16 16" ><g stroke="#50c8b4" stroke-width="1.15"><path d="M8 15.400H3.800a3.200 3.200 0 0 1-3.200-3.200V3.800A3.200 3.200 0 0 1 3.800 0.600h8.400a3.200 3.200 0 0 1 3.200 3.200V7"/><path d="M0.600 8.500h3.800l1 1.800M3.200 5.800h9.600M4.200 3.300h7.600"/><path fill="#1f4d46" d="M16 8.300l-8.300 3.200 3.300 1.500 1.500 3.300z"/></g></svg>
<div class="t" style="left:104px;top:439px;letter-spacing:0.129px;">Outbox</div>
<svg class="ic" style="left:82.0px;top:472.8125px" width="14.0" height="11.375" viewBox="0 0 16 13" ><g stroke="#e6e3a0" stroke-width="1.15"><path fill="#3f3e2c" d="M0.600 2.600a2 2 0 0 1 2-2h3l1.800 2h6a2 2 0 0 1 2 2v5.800a2 2 0 0 1-2 2H2.600a2 2 0 0 1-2-2z"/><path d="M0.600 4.600h5.600l1.200-2"/></g></svg>
<div class="t" style="left:104px;top:465px">Sent-</div>
<div class="red" style="left:130px;top:468px;width:161px;height:27px"></div>
<div class="a" style="left:1470px;top:4px;width:2px;height:963px;background:#1c1e1f"></div>
<div class="a" style="left:388px;top:556.5px;width:1038px;height:369px;background:#28292b;box-shadow:0 3px 16px 5px rgba(0,0,0,.4)"></div>
<div class="a" style="left:433px;top:557px;width:993px;height:40px;background:#222d2e"></div>
<div class="a" style="left:433px;top:597px;width:993px;height:38px;background:linear-gradient(#1b2426,#1f292b 5px,#1f292b)"></div>
<div class="a" style="left:388px;top:556.5px;width:45px;height:369px;background:#242627"></div>
<div class="a" style="left:395px;top:563px;width:30px;height:30px;background:#2896eb;border-radius:3.5px"></div>
<svg class="ic" style="left:401px;top:571px" width="18" height="14" viewBox="0 0 18 14" ><g stroke="#d6ebfb" stroke-width="1.2"><rect x="0.6" y="0.6" width="16.8" height="12.8" rx="2.4" fill="#52aaf0"/><path d="M3.2 3.3L8.1 7.6a1.4 1.4 0 0 0 1.800 0L14.800 3.300M3.200 10.700L7 7M14.800 10.700L11 7"/></g></svg>
<svg class="ic" style="left:402.0px;top:614px" width="15" height="18" viewBox="0 0 15 18" ><g stroke="#cfd0d1" stroke-width="1.2"><rect x="1.800" y="0.600" width="12.600" height="16.800" rx="2.400" fill="#3a3c3e"/><path stroke-width="0.9" d="M0.500 3.200h2.200M0.500 5.500h2.200M0.500 7.800h2.200M0.500 10.100h2.200M0.500 12.400h2.200M0.500 14.700h2.200"/><circle cx="8.300" cy="6.200" r="2.300"/><path d="M4.800 13.200v-1a3.500 3.400 0 0 1 7 0v1"/></g></svg>
<svg class="ic" style="left:401.75px;top:660.0px" width="16.5" height="16.0" viewBox="0 0 16.500 16" ><g stroke="#cfd0d1" stroke-width="1.2"><rect x="0.600" y="0.600" width="15.300" height="14.800" rx="3.200" fill="#3a3c3e"/><path d="M0.600 4.400h15.300M4.300 2.600v3.400M12.200 2.600v3.400"/><path stroke-width="1.250" stroke-linecap="butt" d="M3.800 8h1.800M7.350 8h1.800M10.900 8h1.800M3.800 10.300h1.800M7.350 10.300h1.800M10.900 10.300h1.800M3.800 12.600h1.800M7.350 12.600h1.800M10.900 12.600h1.800"/></g></svg>
<svg class="ic" style="left:403px;top:703.5px" width="14" height="19" viewBox="0 0 14 19" ><g stroke="#cfd0d1" stroke-width="1.2"><rect x="0.600" y="2" width="12.800" height="16.400" rx="2.400" fill="#3a3c3e"/><rect x="4" y="0.600" width="6" height="2.800" rx="1.300" fill="#3a3c3e"/><path d="M3.800 11.200l2.300 2.500 4.300-5.200"/></g></svg>
<svg class="ic" style="left:400.8px;top:749.2px" width="18.4" height="17.6" viewBox="0 0 18.400 17.600" ><g stroke="#cfd0d1" stroke-width="1.2"><path d="M16 5.200a2.400 2.400 0 0 1 1.800 2.300v3.600a2.400 2.400 0 0 1-2.400 2.400h-.6v3.300l-3.600-3.300H9.500" fill="#2b2d2f"/><path fill="#2b2d2f" d="M3 0.600h10.200a2.400 2.400 0 0 1 2.400 2.400v4.800a2.400 2.400 0 0 1-2.400 2.400H8.600L5 13.600v-3.400H3A2.400 2.400 0 0 1 0.600 7.800V3A2.400 2.400 0 0 1 3 0.600z"/><path stroke-width="1.300" d="M5 5.400h.2M8 5.400h.2M11 5.400h.2"/></g></svg>
<svg class="ic" style="left:401px;top:849.5px" width="18" height="19" viewBox="0 0 18 19" ><g stroke="#cfd0d1" stroke-width="1.2"><path fill="#45474a" d="M6.43 1.08 L11.57 1.08 L11.40 3.25 L13.22 4.29 L15.00 3.06 L17.57 7.52 L15.62 8.45 L15.62 10.55 L17.57 11.48 L15.00 15.94 L13.22 14.71 L11.40 15.75 L11.57 17.92 L6.43 17.92 L6.60 15.75 L4.78 14.71 L3.00 15.94 L0.43 11.48 L2.38 10.55 L2.38 8.45 L0.43 7.52 L3.00 3.06 L4.78 4.29 L6.60 3.25Z"/><circle cx="9" cy="9.500" r="2.700" fill="#222526"/></g></svg>
<svg class="ic" style="left:402.5px;top:895.5px" width="17" height="16" viewBox="0 0 17 16" ><g stroke="#cfd0d1" stroke-width="1.100"><path d="M0.600 0.500v15M3.800 8H16M9 2.800L3.800 8l5.200 5.200"/></g></svg>
<div class="a" style="left:645px;top:564px;width:451px;height:26px;background:#1b2325;border:1px solid #7d8587;border-radius:3px"></div>
<div class="t" style="left:652px;top:564px;color:#8d9597;letter-spacing:-0.860px;">Search…</div>
<div class="a kbd" style="left:708px;top:570px;width:30px">CTRL</div>
<div class="a" style="left:741.5px;top:570px;font-size:11px;line-height:14px;color:#8d9597">+</div>
<div class="a kbd" style="left:752.5px;top:570px;width:13.5px">K</div>
<svg class="ic" style="left:1075.5px;top:570px" width="14" height="14" viewBox="0 0 14 14" ><g stroke="#e0e2e3" stroke-width="1.500"><circle cx="5.500" cy="5.500" r="4.500"/><path d="M9 9l4.500 4.500"/></g></svg>
<div class="a" style="left:1297px;top:572px;width:12px;height:1px;background:#d9dcdc"></div>
<div class="a" style="left:1297px;top:576px;width:12px;height:1px;background:#d9dcdc"></div>
<div class="a" style="left:1297px;top:580px;width:12px;height:1px;background:#d9dcdc"></div>
<div class="a" style="left:1333px;top:581px;width:10px;height:2px;background:#eef0f0"></div>
<div class="a" style="left:1367px;top:573px;width:10px;height:10px;border:2px solid #eef0f0"></div>
<svg class="ic" style="left:1400.5px;top:573.0px" width="10.0" height="10.0" viewBox="0 0 10 10" ><path stroke="#eef0f0" stroke-width="2" d="M0.800 0.800l8.400 8.400M9.200 0.800L0.800 9.200"/></svg>
<div class="red" style="left:445px;top:606px;width:216px;height:27px"></div>
<div class="a" style="left:687px;top:603px;width:250px;height:32px;background:#485458;border-radius:4px 4px 0 0"></div>
<div class="a" style="left:689.500px;top:604.500px;width:245px;height:2.500px;background:#3b8fdb"></div>
<svg class="ic" style="left:697.375px;top:612.0px" width="12.25" height="14.0" viewBox="0 0 14 16" ><g stroke="#e4e7e8" stroke-width="1.15"><rect x="0.600" y="0.600" width="12.800" height="14.800" rx="2.200" fill="none"/><path d="M3.800 4.300h6.400M3.800 7.300h5M5.500 10.500h4.700"/></g></svg>
<div class="t" style="left:717.500px;top:604.500px;width:190px;overflow:hidden;color:#e4e7e8;-webkit-mask-image:linear-gradient(90deg,#000 165px,transparent 190px)">Hey ! please do this quick one for me, takes</div>
<svg class="ic" style="left:915.5px;top:614.5px" width="9.0" height="9.0" viewBox="0 0 10 10" ><path stroke="#e8eaeb" stroke-width="1.6" d="M0.800 0.800l8.400 8.400M9.200 0.800L0.800 9.200"/></svg>
<div class="a" style="left:442px;top:645px;width:26px;height:26px;border-radius:50%;background:#4b4d50;color:#a9abad;text-align:center;line-height:26px;font-size:13px">N</div>
<div class="a" style="left:679.5px;top:645.5px;font-size:9px;color:#e6e7e8">&gt;</div>
<div class="red" style="left:473px;top:638px;width:210px;height:22px"></div>
<div class="red" style="left:469px;top:662px;width:151px;height:21px"></div>
<svg class="ic" style="left:692px;top:652px" width="12" height="12" viewBox="0 0 12 12" ><g stroke="#3b82e8" stroke-width="1.300"><circle cx="6" cy="6" r="5.300"/><circle cx="6" cy="4.800" r="1.800"/><path d="M2.800 9.800a3.400 3.400 0 0 1 6.400 0"/></g></svg>
<div class="t" style="left:442px;top:681.5px;color:#c3c5c7">To</div>
<div class="t" style="left:462px;top:681.5px;color:#ececed;letter-spacing:0.097px;">nihilist@contact.nowhere.moe</div>
<svg class="ic" style="left:637px;top:690px" width="12" height="12" viewBox="0 0 12 12" ><g stroke="#3b82e8" stroke-width="1.300"><circle cx="6" cy="6" r="5.300"/><circle cx="6" cy="4.800" r="1.800"/><path d="M2.800 9.800a3.400 3.400 0 0 1 6.400 0"/></g></svg>
<div class="t" style="left:442px;top:709px;font-size:17.2px;color:#f4f4f5;letter-spacing:0.081px;">Hey ! please do this quick one for me, takes more than 2 minutes !!</div>
<div class="btn" style="left:802.5px;width:58px"></div>
<svg class="ic" style="left:809.5px;top:653px" width="13" height="12" viewBox="0 0 13 12" ><path stroke="#e0e1e2" stroke-width="1.15" fill="#3c3e40" d="M5.800 0.800L0.800 5.200l5 4.400V7.100c3 0 4.800 1 6.200 3.600C12 6.600 9.800 3.700 5.800 3.400z"/></svg>
<div class="t" style="left:826.3px;top:645px;color:#e6e7e8;letter-spacing:-0.383px;">Reply</div>
<div class="btn" style="left:864px;width:75px"></div>
<svg class="ic" style="left:870.5px;top:653px" width="13" height="12" viewBox="0 0 13 12" ><path stroke="#e0e1e2" stroke-width="1.15" fill="#3c3e40" d="M7.200 0.800l5 4.400-5 4.400V7.100c-3 0-4.800 1-6.200 3.600C1 6.600 3.200 3.700 7.200 3.400z"/></svg>
<div class="t" style="left:888px;top:645px;color:#e6e7e8;letter-spacing:0.027px;">Forward</div>
<div class="btn" style="left:942.5px;width:68px"></div>
<svg class="ic" style="left:948.0px;top:652.0px" width="14.0" height="14.0" viewBox="0 0 16 16" ><g stroke="#e0e1e2" stroke-width="1.15"><rect x="0.600" y="0.600" width="14.800" height="14.800" rx="3.200" fill="none"/><path d="M0.600 4.200h14.800M3 4.200l4 4.300v6.900M13 4.200l-4 4.300v6.900"/><path stroke-width="0.9" stroke-dasharray="1 1" d="M8 8.500v7"/></g></svg>
<div class="t" style="left:966px;top:645px;color:#e6e7e8;letter-spacing:-0.202px;">Archive</div>
<div class="btn" style="left:1014px;width:52.5px"></div>
<svg class="ic" style="left:1020.3px;top:652.35px" width="11.399999999999999" height="13.299999999999999" viewBox="0 0 12 14" ><path stroke="#e0e1e2" stroke-width="1.1" fill="#3c3e40" d="M6.500 0.600C7 3 11.400 4.500 11.400 9C11.400 11.400 9.800 13 8 13.400C8.900 12.400 8.900 10.800 7.600 10C6.800 9.500 6.200 9 6 8C5.200 9 4 10 4 11.500C4 12.300 4.300 13 4.800 13.400C2.500 13 0.600 11.200 0.600 8.800C0.600 6.500 2 5.500 2.600 4C3.300 4.600 3.600 5.400 3.600 6.200C5 5 6.500 3 6.500 0.600Z"/></svg>
<div class="t" style="left:1038px;top:645px;color:#e6e7e8;letter-spacing:-0.529px;">Junk</div>
<div class="btn" style="left:1070px;width:64px"></div>
<svg class="ic" style="left:1076.375px;top:652.0px" width="12.25" height="14.0" viewBox="0 0 14 16" ><g stroke="#e0e1e2" stroke-width="1.15"><path d="M0.600 3.400h12.800M4.600 3.400V1.800a1.200 1.200 0 0 1 1.200-1.200h2.400a1.200 1.200 0 0 1 1.200 1.200v1.600M1.900 3.400l0.700 10.200a2 2 0 0 0 2 1.800h4.800a2 2 0 0 0 2-1.800l0.700-10.200M5 6.500v6M7 6.500v6M9 6.500v6"/></g></svg>
<div class="t" style="left:1094px;top:645px;color:#e6e7e8;letter-spacing:-0.070px;">Delete</div>
<div class="btn" style="left:1138px;width:54px;background:#6d6f71;border-color:#87898b"></div>
<div class="t" style="left:1143.4px;top:645px;color:#f4f4f5;letter-spacing:0.173px;">More</div>
<svg class="ic" style="left:1177.0px;top:656.8px" width="9.0" height="5.4" viewBox="0 0 10 6" ><path stroke="#f4f4f5" d="M0.8 1L5 5 9.200 1"/></svg>
<svg class="ic" style="left:1200.5px;top:651.0px" width="16.0" height="16.0" viewBox="0 0 16 16" ><path stroke="#6a6c6f" fill="#3a3c3e" stroke-width="1.15" d="M8.00 1.60 L10.29 5.34 L14.56 6.37 L11.71 9.71 L12.06 14.08 L8.00 12.40 L3.94 14.08 L4.29 9.71 L1.44 6.37 L5.71 5.34Z"/></svg>
<div class="a" style="left:433px;top:743.5px;width:794px;height:158.5px;background:#fff"></div>
<div class="a" style="left:441px;top:754px;font-family:'Liberation Mono',monospace;font-size:12px;line-height:17px;color:#101010;white-space:pre">Hey man

i need you to go and do a tutorial on zero email workflow!

NEED THIS ASAP!!!!!1!!111!!!</div>
<div class="a" style="left:717.4px;top:813px;font-size:20.5px;line-height:28px;color:#e0171b;white-space:pre;letter-spacing:-0.019px;">long task, so we mark it as "Todo"</div>
<svg class="ic" style="left:439px;top:909.5px" width="16" height="11" viewBox="0 0 16 11" ><g stroke="#c9cacb" stroke-width="1.100"><circle cx="8" cy="5.500" r="1.300"/><path d="M5.300 2.800a3.800 3.800 0 0 0 0 5.400M10.700 2.800a3.800 3.800 0 0 1 0 5.400M3 0.800a6.600 6.600 0 0 0 0 9.400M13 0.800a6.600 6.600 0 0 1 0 9.400"/></g></svg>
<div class="a" style="left:1227px;top:635px;width:199px;height:33px;background:#191b1d;border-bottom:1px solid #3b3e40;border-left:1px solid #323537"></div>
<div class="a" style="left:1227px;top:668px;width:199px;height:234px;background:#28292b;border-left:1px solid #323537"></div>
<div class="t" style="left:1236px;top:636.5px;color:#f1f1f2;letter-spacing:-0.253px;">Events</div>
<svg class="ic" style="left:1355.85px;top:645.75px" width="6.300000000000001" height="10.5" viewBox="0 0 6 10" ><path stroke="#f1f1f2" d="M5 0.8L1 5 5 9.200"/></svg>
<svg class="ic" style="left:1381.85px;top:645.75px" width="6.300000000000001" height="10.5" viewBox="0 0 6 10" ><path stroke="#f1f1f2" d="M1 0.8L5 5 1 9.200"/></svg>
<svg class="ic" style="left:1407.5px;top:646.0px" width="10.0" height="10.0" viewBox="0 0 10 10" ><path stroke="#f4f4f5" stroke-width="2" d="M0.800 0.800l8.400 8.400M9.200 0.800L0.800 9.200"/></svg>
<div class="t b" style="left:1277.5px;top:669.5px;font-size:19px;color:#f4f4f5">Sat</div>
<svg class="ic" style="left:1351.0px;top:678.0px" width="6.0" height="10.0" viewBox="0 0 6 10" ><path stroke="#e0e1e2" d="M5 0.8L1 5 5 9.200"/></svg>
<div class="a" style="left:1368px;top:677.500px;width:11px;height:11px;border:1.300px solid #e0e1e2;border-radius:50%"></div>
<svg class="ic" style="left:1391.7px;top:678.0px" width="6.0" height="10.0" viewBox="0 0 6 10" ><path stroke="#e0e1e2" d="M1 0.8L5 5 1 9.200"/></svg>
<svg class="ic" style="left:1410.0px;top:689.0px" width="10.0" height="6.0" viewBox="0 0 10 6" ><path stroke="#e0e1e2" d="M0.8 1L5 5 9.200 1"/></svg>
<div class="t" style="left:1277.5px;top:691px;color:#e0e1e2;letter-spacing:-0.276px;">Oct 2024  CW 43</div>
<div class="t" style="left:1291px;top:882.5px;color:#ececed;letter-spacing:0.059px;">Restaurant w/</div>
<div class="a" style="left:1227px;top:902px;width:199px;height:23px;background:#28292b;border-top:1px solid #3b3e40"></div>
<svg class="ic" style="left:1316px;top:906.5px" width="15" height="16" viewBox="0 0 15 16" ><g stroke="#d4d5d6" stroke-width="1"><rect x="0.500" y="1.500" width="14" height="14" rx="2.500"/><path d="M0.500 5h14M4 0.500v3M11 0.500v3"/></g></svg>
<div class="a b" style="left:1317px;top:913px;width:13px;text-align:center;font-size:8.500px;line-height:8px;color:#d4d5d6">26</div>
<div class="t" style="left:1337.7px;top:900.5px;color:#dcdddd;letter-spacing:-0.245px;">Today Pane</div>
<svg class="ic" style="left:1409.0px;top:912.3px" width="9.0" height="5.4" viewBox="0 0 10 6" ><path stroke="#dcdddd" d="M0.8 1L5 5 9.200 1"/></svg>
<div class="a" style="left:1138px;top:671px;width:157px;height:287px;background:#262829;border:1px solid #47494c;border-radius:9px;box-shadow:0 2px 8px rgba(0,0,0,.4)"></div>
<div class="a" style="left:1142px;top:710px;width:149px;height:25px;background:#3c3e40;border-radius:3px"></div>
<div class="mi" style="left:1150.2px;top:675.5px;letter-spacing:-0.102px;">Redirect</div>
<div class="mi" style="left:1150.2px;top:709.5px;letter-spacing:-0.505px;">Tag</div>
<svg class="ic" style="left:1273.0px;top:716.0px" width="6.0" height="10.0" viewBox="0 0 6 10" ><path stroke="#dcdddd" d="M1 0.8L5 5 1 9.200"/></svg>
<div class="mi" style="left:1150.2px;top:734.5px;letter-spacing:-0.060px;">Ma<u>r</u>k as Unread</div>
<div class="mi" style="left:1150.2px;top:759.5px;letter-spacing:-0.941px;"><u>S</u>ave as…</div>
<div class="mi" style="left:1150.2px;top:784.5px;letter-spacing:-0.451px;"><u>P</u>rint…</div>
<div class="mi" style="left:1150.2px;top:809.5px;letter-spacing:-0.090px;">Co<u>n</u>vert To</div>
<svg class="ic" style="left:1273.0px;top:816.0px" width="6.0" height="10.0" viewBox="0 0 6 10" ><path stroke="#dcdddd" d="M1 0.8L5 5 1 9.200"/></svg>
<div class="mi" style="left:1150.2px;top:843.5px;letter-spacing:-0.273px;"><u>V</u>iew Source</div>
<div class="mi" style="left:1150.2px;top:868.5px;letter-spacing:-0.107px;">Repair Text Encoding</div>
<div class="mi" style="left:1150.2px;top:893.5px;letter-spacing:-0.204px;">Message Body As</div>
<svg class="ic" style="left:1273.0px;top:900.0px" width="6.0" height="10.0" viewBox="0 0 6 10" ><path stroke="#dcdddd" d="M1 0.8L5 5 1 9.200"/></svg>
<div class="mi" style="left:1150.2px;top:927.5px;letter-spacing:-0.382px;">Customize…</div>
<div class="a" style="left:1291px;top:707px;width:168px;height:178px;background:#262829;border:1px solid #47494c;border-radius:9px;box-shadow:0 2px 8px rgba(0,0,0,.4)"></div>
<div class="mi" style="left:1324px;top:711.5px;color:#eceded;letter-spacing:-0.549px;"><u>N</u>ew Tag…</div>
<div class="mi" style="left:1324px;top:736.5px;color:#eceded;letter-spacing:-0.377px;"><u>M</u>anage Tags…</div>
<div class="mi" style="left:1324px;top:770.5px;color:#eceded;letter-spacing:-0.195px;"><u>0</u> Remove All Tags</div>
<div class="mi" style="left:1434.500px;top:770.5px;color:#eceded">0</div>
<div class="mi" style="left:1324px;top:804.5px;color:#cf2424;letter-spacing:-0.492px;"><u>1</u> TODO</div>
<div class="mi" style="left:1434.500px;top:804.5px;color:#cf2424">1</div>
<div class="mi" style="left:1324px;top:829.5px;color:#f2a031;letter-spacing:-0.039px;"><u>2</u> Pending</div>
<div class="mi" style="left:1434.500px;top:829.5px;color:#f2a031">2</div>
<div class="mi" style="left:1324px;top:854.5px;color:#2b9a1f;letter-spacing:-0.232px;"><u>3</u> Review Later</div>
<div class="mi" style="left:1434.500px;top:854.5px;color:#2b9a1f">3</div>
<svg style="left:0;top:0" width="1472" height="967" viewBox="0 0 1472 967"><line x1="309" y1="208" x2="333.1" y2="284.1" stroke="#fe0000" stroke-width="4.2" stroke-linecap="round"/><polygon points="340,306 323.9,284.9 341.0,279.4" fill="#fe0000"/><line x1="793.5" y1="326" x2="738.9" y2="576.5" stroke="#fe0000" stroke-width="3.2" stroke-linecap="round"/><polygon points="734.6,596 730.5,572.6 748.1,576.4" fill="#fe0000"/><line x1="754" y1="644" x2="747.2" y2="764.5" stroke="#fe0000" stroke-width="3.6" stroke-linecap="round"/><polygon points="746,786.5 738.9,762.1 755.8,763.0" fill="#fe0000"/><line x1="1020" y1="813.5" x2="1121.8" y2="685.8" stroke="#fe0000" stroke-width="4.2" stroke-linecap="round"/><polygon points="1136.8,667 1127.2,692.6 1113.9,682.0" fill="#fe0000"/><line x1="1138.5" y1="667" x2="1139.8" y2="691.5" stroke="#fe0000" stroke-width="3.6" stroke-linecap="round"/><polygon points="1141,712.5 1131.8,690.0 1147.7,689.1" fill="#fe0000"/><line x1="1286.5" y1="733" x2="1307.6" y2="791.8" stroke="#fe0000" stroke-width="4" stroke-linecap="round"/><polygon points="1315,812.5 1298.4,792.9 1315.4,786.9" fill="#fe0000"/></svg>
</body></html>
